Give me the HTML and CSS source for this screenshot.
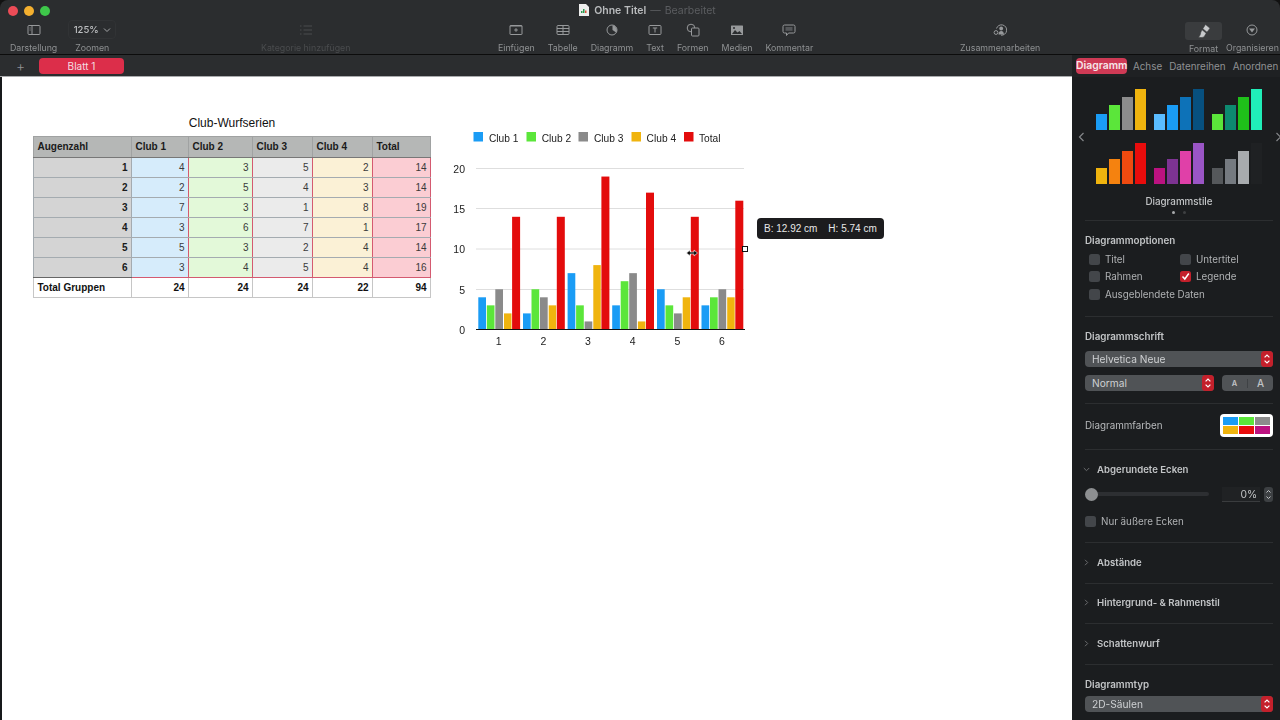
FILE: index.html
```html
<!DOCTYPE html>
<html lang="de">
<head>
  <meta charset="UTF-8">
  <title>Ohne Titel</title>
  <link rel="stylesheet" href="styles.css">
</head>
<body>
  <svg class="defs" width="0" height="0">
    <symbol id="stepper" viewBox="0 0 12 16">
      <rect width="12" height="16" rx="3.5" fill="#c4202b"/>
      <path d="M3.6 6.4 6 4l2.4 2.4M3.6 9.6 6 12l2.4-2.4" fill="none" stroke="#fff" stroke-width="1.2"/>
    </symbol>
  </svg>

  <div class="app">
    <header class="toolbar">
      <div class="traffic">
        <span class="light red"></span>
        <span class="light yellow"></span>
        <span class="light green"></span>
      </div>
      <div class="doc-title">
        <svg class="doc-icon" width="10" height="12" viewBox="0 0 10 12">
          <path d="M0 0h7l3 3v9H0z" fill="#eee"/>
          <path d="M2 9V7h1.5v2zM4 9V5h1.5v4z" fill="#2c9a50"/>
          <path d="M6 9V6.5h1.5V9z" fill="#e0503c"/>
        </svg>
        <b>Ohne Titel</b>
        <span class="dash">—</span>
        <span class="edited">Bearbeitet</span>
      </div>
      <div class="tools">
        <div class="group group-view">
          <div class="tool">
            <svg width="14" height="12" viewBox="0 0 14 12"><rect x="1" y="1.5" width="12" height="9" rx="1"/><path d="M5 1.5v9M2.600 4h1M2.600 6h1"/></svg>
            <span>Darstellung</span>
          </div>
          <div class="tool tool-zoom">
            <div class="zoom-box">125% <svg width="8" height="6" viewBox="0 0 8 6"><path d="M1 1.500 4 4.500 7 1.500"/></svg></div>
            <span>Zoomen</span>
          </div>
        </div>
        <div class="group group-category">
          <div class="tool dim">
            <svg width="14" height="12" viewBox="0 0 14 12"><path d="M1 2h1.500M1 6h1.500M1 10h1.500M4.500 2H13M4.500 6H13M4.500 10H13"/></svg>
            <span>Kategorie hinzufügen</span>
          </div>
        </div>
        <div class="group group-insert">
          <div class="tool">
            <svg width="14" height="12" viewBox="0 0 14 12"><rect x="1" y="1.500" width="12" height="9" rx=".5"/><path d="M1 2h12M7 4.200v3.600M5.200 6h3.600"/></svg>
            <span>Einfügen</span>
          </div>
          <div class="tool">
            <svg width="14" height="12" viewBox="0 0 14 12"><rect x="1" y="1.500" width="12" height="9" rx="1"/><path d="M1 4.500h12M1 7.500h12M7 1.500v9"/></svg>
            <span>Tabelle</span>
          </div>
          <div class="tool">
            <svg width="14" height="12" viewBox="0 0 14 12"><circle cx="7" cy="6" r="5"/><path class="solid" d="M7.500 1.200A5 5 0 0 1 11.200 8.500L7.500 6z"/></svg>
            <span>Diagramm</span>
          </div>
          <div class="tool">
            <svg width="14" height="12" viewBox="0 0 14 12"><rect x="1" y="1.500" width="12" height="9" rx="1"/><path d="M4.800 4h4.400M7 4v4.500"/></svg>
            <span>Text</span>
          </div>
          <div class="tool">
            <svg width="14" height="14" viewBox="0 0 14 14"><circle cx="5" cy="5" r="3.800"/><rect x="5.500" y="5" width="7.500" height="8" rx="1" fill="#2b2d2f"/></svg>
            <span>Formen</span>
          </div>
          <div class="tool">
            <svg width="14" height="12" viewBox="0 0 14 12"><rect class="solid" x="1" y="1.500" width="12" height="9.500" rx=".5"/><path class="cutout" d="M2 10 5 6l2.500 2.500L9.500 7l2.500 3z"/><circle class="cutout" cx="4" cy="4" r="1"/></svg>
            <span>Medien</span>
          </div>
          <div class="tool">
            <svg width="14" height="12" viewBox="0 0 14 12"><path d="M2.500 1h9A1.500 1.500 0 0 1 13 2.500v5A1.500 1.500 0 0 1 11.500 9H6.500l-2 2.500V9h-2A1.500 1.500 0 0 1 1 7.500v-5A1.500 1.500 0 0 1 2.500 1z"/><rect class="soft" x="3.500" y="3" width="7" height="3.800"/></svg>
            <span>Kommentar</span>
          </div>
        </div>
        <div class="group group-collab">
          <div class="tool">
            <svg width="14" height="12" viewBox="0 0 14 12"><path d="M3.500 4.500A5.200 5.200 0 1 1 8 11.200"/><circle class="solid" cx="8.200" cy="4.500" r="1.900"/><path class="solid" d="M5.500 10.500c0-2.500 1.200-3.500 2.700-3.500s2.700 1 2.700 3.500z"/><circle cx="3" cy="8.500" r="1.900"/></svg>
            <span>Zusammenarbeiten</span>
          </div>
        </div>
        <div class="group group-side">
          <div class="tool tool-format">
            <div class="format-box">
              <svg width="14" height="14" viewBox="0 0 14 14"><path class="brush" d="M8.500 .5 13 4.200 10 8.200 5.800 4.700z"/><path class="brush" d="M5 5.700 9.200 9.200 7 13c-2 .6-3.500.6-5.500.3 1.200-1.200 2-2.800 2.300-5z"/></svg>
            </div>
            <span>Format</span>
          </div>
          <div class="tool">
            <svg width="14" height="12" viewBox="0 0 14 12"><circle cx="7" cy="6" r="5"/><path class="solid" d="M4 4.500h6L7 8.500z"/></svg>
            <span>Organisieren</span>
          </div>
        </div>
      </div>
    </header>

    <div class="workspace">
      <main class="sheet-area">
        <div class="tabbar">
          <span class="add-sheet">+</span>
          <span class="sheet-tab">Blatt 1</span>
        </div>
        <div class="canvas">
          <section class="table-block">
            <h2>Club-Wurfserien</h2>
            <table class="data-table">
              <colgroup>
                <col class="col-a"><col class="col-b"><col class="col-c"><col class="col-d"><col class="col-e"><col class="col-f">
              </colgroup>
              <thead>
                <tr><th>Augenzahl</th><th>Club 1</th><th>Club 2</th><th>Club 3</th><th>Club 4</th><th>Total</th></tr>
              </thead>
              <tbody>
                <tr><th>1</th><td class="c-blue">4</td><td class="c-green">3</td><td class="c-grey">5</td><td class="c-yellow">2</td><td class="c-red">14</td></tr>
                <tr><th>2</th><td class="c-blue">2</td><td class="c-green">5</td><td class="c-grey">4</td><td class="c-yellow">3</td><td class="c-red">14</td></tr>
                <tr><th>3</th><td class="c-blue">7</td><td class="c-green">3</td><td class="c-grey">1</td><td class="c-yellow">8</td><td class="c-red">19</td></tr>
                <tr><th>4</th><td class="c-blue">3</td><td class="c-green">6</td><td class="c-grey">7</td><td class="c-yellow">1</td><td class="c-red">17</td></tr>
                <tr><th>5</th><td class="c-blue">5</td><td class="c-green">3</td><td class="c-grey">2</td><td class="c-yellow">4</td><td class="c-red">14</td></tr>
                <tr><th>6</th><td class="c-blue">3</td><td class="c-green">4</td><td class="c-grey">5</td><td class="c-yellow">4</td><td class="c-red">16</td></tr>
              </tbody>
              <tfoot>
                <tr><th>Total Gruppen</th><td>24</td><td>24</td><td>24</td><td>22</td><td>94</td></tr>
              </tfoot>
            </table>
          </section>

          <svg class="chart" width="300" height="225" viewBox="450 125 300 225">
            <!-- legend -->
            <rect class="s1" x="473.500" y="132" width="9.500" height="9.500"/><text class="legend" x="489" y="141.500">Club 1</text>
            <rect class="s2" x="526.500" y="132" width="9.500" height="9.500"/><text class="legend" x="541.700" y="141.500">Club 2</text>
            <rect class="s3" x="578.500" y="132" width="9.500" height="9.500"/><text class="legend" x="594" y="141.500">Club 3</text>
            <rect class="s4" x="631.500" y="132" width="9.500" height="9.500"/><text class="legend" x="646.600" y="141.500">Club 4</text>
            <rect class="s5" x="684" y="132" width="9.500" height="9.500"/><text class="legend" x="699" y="141.500">Total</text>

            <!-- grid -->
            <path class="grid" d="M476 168.500H744M476 208.500H744M476 249H744M476 289.500H744"/>
            <text class="tick" x="465" y="172.500">20</text>
            <text class="tick" x="465" y="212.500">15</text>
            <text class="tick" x="465" y="253">10</text>
            <text class="tick" x="465" y="293.500">5</text>
            <text class="tick" x="465" y="334">0</text>

            <!-- bars: 8.05px per unit, drawn up from the axis -->
            <g transform="translate(478.300 329.500)">
              <rect class="s1" x="0" y="-32.200" width="7.700" height="32.200"/>
              <rect class="s2" x="8.500" y="-24.150" width="7.700" height="24.150"/>
              <rect class="s3" x="17" y="-40.250" width="7.700" height="40.250"/>
              <rect class="s4" x="25.700" y="-16.100" width="7.500" height="16.100"/>
              <rect class="s5" x="33.800" y="-112.700" width="8" height="112.700"/>
            </g>
            <g transform="translate(523 329.500)">
              <rect class="s1" x="0" y="-16.100" width="7.700" height="16.100"/>
              <rect class="s2" x="8.500" y="-40.250" width="7.700" height="40.250"/>
              <rect class="s3" x="17" y="-32.200" width="7.700" height="32.200"/>
              <rect class="s4" x="25.700" y="-24.150" width="7.500" height="24.150"/>
              <rect class="s5" x="33.800" y="-112.700" width="8" height="112.700"/>
            </g>
            <g transform="translate(567.600 329.500)">
              <rect class="s1" x="0" y="-56.350" width="7.700" height="56.350"/>
              <rect class="s2" x="8.500" y="-24.150" width="7.700" height="24.150"/>
              <rect class="s3" x="17" y="-8.050" width="7.700" height="8.050"/>
              <rect class="s4" x="25.700" y="-64.400" width="7.500" height="64.400"/>
              <rect class="s5" x="33.800" y="-152.950" width="8" height="152.950"/>
            </g>
            <g transform="translate(612.200 329.500)">
              <rect class="s1" x="0" y="-24.150" width="7.700" height="24.150"/>
              <rect class="s2" x="8.500" y="-48.300" width="7.700" height="48.300"/>
              <rect class="s3" x="17" y="-56.350" width="7.700" height="56.350"/>
              <rect class="s4" x="25.700" y="-8.050" width="7.500" height="8.050"/>
              <rect class="s5" x="33.800" y="-136.850" width="8" height="136.850"/>
            </g>
            <g transform="translate(657 329.500)">
              <rect class="s1" x="0" y="-40.250" width="7.700" height="40.250"/>
              <rect class="s2" x="8.500" y="-24.150" width="7.700" height="24.150"/>
              <rect class="s3" x="17" y="-16.100" width="7.700" height="16.100"/>
              <rect class="s4" x="25.700" y="-32.200" width="7.500" height="32.200"/>
              <rect class="s5" x="33.800" y="-112.700" width="8" height="112.700"/>
            </g>
            <g transform="translate(701.500 329.500)">
              <rect class="s1" x="0" y="-24.150" width="7.700" height="24.150"/>
              <rect class="s2" x="8.500" y="-32.200" width="7.700" height="32.200"/>
              <rect class="s3" x="17" y="-40.250" width="7.700" height="40.250"/>
              <rect class="s4" x="25.700" y="-32.200" width="7.500" height="32.200"/>
              <rect class="s5" x="33.800" y="-128.800" width="8" height="128.800"/>
            </g>

            <path class="axis" d="M476 329.500H745"/>
            <text class="cat" x="498.700" y="344.500">1</text>
            <text class="cat" x="543.300" y="344.500">2</text>
            <text class="cat" x="588" y="344.500">3</text>
            <text class="cat" x="632.600" y="344.500">4</text>
            <text class="cat" x="677.300" y="344.500">5</text>
            <text class="cat" x="722" y="344.500">6</text>

            <!-- selection handle and resize cursor -->
            <rect class="handle" x="742.500" y="246.500" width="5" height="5"/>
            <path class="cursor" d="M686.500 253l3.500-3v2h4v-2l3.500 3-3.500 3v-2h-4v2z"/>
          </svg>

          <div class="size-tip"><span>B: 12.92 cm</span><span>H: 5.74 cm</span></div>
        </div>
      </main>

      <aside class="inspector">
        <nav class="inspector-tabs">
          <span class="itab active">Diagramm</span>
          <span class="itab">Achse</span>
          <i class="tab-sep"></i>
          <span class="itab">Datenreihen</span>
          <i class="tab-sep"></i>
          <span class="itab">Anordnen</span>
        </nav>

        <section class="isec sec-styles">
          <svg class="arrow arrow-left" width="7" height="10" viewBox="0 0 7 10"><path d="M5.500 1 1.500 5l4 4"/></svg>
          <div class="style-grid">
            <div class="swatch"><i class="b-blue"></i><i class="b-lime"></i><i class="b-gray"></i><i class="b-amber"></i></div>
            <div class="swatch"><i class="b-sky"></i><i class="b-blue"></i><i class="b-ocean"></i><i class="b-navy"></i></div>
            <div class="swatch"><i class="b-lime"></i><i class="b-teal"></i><i class="b-leaf"></i><i class="b-mint"></i></div>
            <div class="swatch"><i class="b-amber"></i><i class="b-orange"></i><i class="b-flame"></i><i class="b-red"></i></div>
            <div class="swatch"><i class="b-berry"></i><i class="b-plum"></i><i class="b-pink"></i><i class="b-violet"></i></div>
            <div class="swatch"><i class="b-slate"></i><i class="b-steel"></i><i class="b-silver"></i><i class="b-ink"></i></div>
          </div>
          <svg class="arrow arrow-right" width="7" height="10" viewBox="0 0 7 10"><path d="M1.500 1l4 4-4 4"/></svg>
          <div class="style-name">Diagrammstile</div>
          <div class="dots"><i class="on"></i><i></i></div>
        </section>

        <section class="isec sec-options">
          <h3>Diagrammoptionen</h3>
          <div class="check-grid">
            <label class="check"><i class="box"></i>Titel</label>
            <label class="check"><i class="box"></i>Untertitel</label>
            <label class="check"><i class="box"></i>Rahmen</label>
            <label class="check"><i class="box checked"><svg width="11" height="11" viewBox="0 0 11 11"><path d="M2.500 5.500 4.800 8 8.800 2.500"/></svg></i>Legende</label>
            <label class="check wide"><i class="box"></i>Ausgeblendete Daten</label>
          </div>
        </section>

        <section class="isec sec-font">
          <h3>Diagrammschrift</h3>
          <div class="select">Helvetica Neue<svg width="12" height="16"><use href="#stepper"/></svg></div>
          <div class="font-row">
            <div class="select select-weight">Normal<svg width="12" height="16"><use href="#stepper"/></svg></div>
            <div class="size-btns"><span class="small-a">A</span><span class="big-a">A</span></div>
          </div>
        </section>

        <section class="isec sec-colors">
          <span class="plain-label">Diagrammfarben</span>
          <div class="palette">
            <i class="b-blue"></i><i class="b-lime"></i><i class="b-gray"></i>
            <i class="b-amber"></i><i class="b-red"></i><i class="b-berry"></i>
          </div>
        </section>

        <section class="isec sec-corners">
          <h4 class="disclosure"><svg width="7" height="7" viewBox="0 0 7 7"><path d="M.8 2l2.700 2.700L6.200 2"/></svg>Abgerundete Ecken</h4>
          <div class="slider-row">
            <div class="slider"><i class="knob"></i></div>
            <div class="percent">0%</div>
            <div class="mini-stepper">
              <svg width="9" height="15" viewBox="0 0 9 15"><rect width="9" height="15" rx="3"/><path d="M2.500 5.500 4.500 3.500l2 2M2.500 9.500l2 2 2-2"/></svg>
            </div>
          </div>
          <label class="check outer"><i class="box"></i>Nur äußere Ecken</label>
        </section>

        <section class="isec sec-fold">
          <h4 class="disclosure"><svg width="7" height="7" viewBox="0 0 7 7"><path d="M2 .8l2.700 2.700L2 6.200"/></svg>Abstände</h4>
        </section>
        <section class="isec sec-fold">
          <h4 class="disclosure"><svg width="7" height="7" viewBox="0 0 7 7"><path d="M2 .8l2.700 2.700L2 6.200"/></svg>Hintergrund- &amp; Rahmenstil</h4>
        </section>
        <section class="isec sec-fold">
          <h4 class="disclosure"><svg width="7" height="7" viewBox="0 0 7 7"><path d="M2 .8l2.700 2.700L2 6.200"/></svg>Schattenwurf</h4>
        </section>

        <section class="isec sec-type">
          <h3>Diagrammtyp</h3>
          <div class="select">2D-Säulen<svg width="12" height="16"><use href="#stepper"/></svg></div>
        </section>
      </aside>
    </div>
  </div>
</body>
</html>
```

FILE: styles.css
```css
html, body {
  margin: 0;
  padding: 0;
  height: 720px;
  overflow: hidden;
  background: #111;
}

body {
  font-family: Inter, "Noto Sans", sans-serif;
}

.defs {
  position: absolute;
}

.app {
  width: 1280px;
  height: 720px;
  display: flex;
  flex-direction: column;
  border-radius: 8px 8px 0 0;
  overflow: hidden;
  filter: blur(0.35px);
}

/* toolbar */
.toolbar {
  height: 54px;
  flex: none;
  position: relative;
  background: #2b2d2f;
  border-bottom: 1px solid #0c0c0c;
}

.traffic {
  position: absolute;
  left: 8px;
  top: 5.5px;
  display: flex;
  gap: 6px;
}

.light {
  width: 10px;
  height: 10px;
  border-radius: 50%;
}

.light.red { background: #ec4c57; }
.light.yellow { background: #f4b02f; }
.light.green { background: #3ec74a; }

.doc-title {
  height: 20px;
  display: flex;
  align-items: center;
  justify-content: center;
  gap: 4px;
  margin-left: 15px;
  font-size: 10.500px;
  color: #b9bbbd;
}

.doc-title b {
  margin-left: 1px;
  font-weight: 600;
}

.dash, .edited {
  color: #5b5d60;
}

.tools {
  display: flex;
  padding-left: 10px;
  height: 34px;
}

.group {
  display: flex;
  gap: 13px;
  flex: none;
}

.group-view { width: 251px; gap: 11px; }
.group-category { width: 237px; }
.group-insert { width: 462px; }
.group-collab { width: 225px; }
.group-side { gap: 4px; }

.tool {
  display: flex;
  flex-direction: column;
  align-items: center;
  font-size: 8.800px;
  color: #8f9193;
  white-space: nowrap;
}

.tool > svg {
  height: 14px;
  margin-top: 3px;
  margin-bottom: 4.500px;
}

.tool svg path,
.tool svg rect,
.tool svg circle {
  fill: none;
  stroke: #97999b;
  stroke-width: 1;
}

.tool svg rect[fill] {
  fill: #2b2d2f;
}

.tool svg .solid {
  fill: #97999b;
  stroke: none;
}

.tool svg .cutout {
  fill: #2b2d2f;
  stroke: none;
}

.tool svg .soft {
  fill: #55575a;
  stroke: none;
}

.tool.dim {
  color: #4a4c4e;
}

.tool.dim svg path {
  stroke: #4a4c4e;
}

.zoom-box {
  height: 19px;
  width: 48px;
  margin-bottom: 2.500px;
  box-sizing: border-box;
  border: 1px solid #313335;
  border-radius: 4px;
  color: #bdbfc1;
  font-size: 9.500px;
  font-weight: 500;
  display: flex;
  align-items: center;
  justify-content: center;
  gap: 4px;
}

.tool .zoom-box svg path {
  stroke: #a5a7a9;
}

.format-box {
  width: 37px;
  height: 18px;
  margin: 2px 0 2.500px;
  border-radius: 3px;
  background: #3a3c3e;
  display: flex;
  align-items: center;
  justify-content: center;
}

.tool .format-box svg .brush {
  fill: #c8cacc;
  stroke: #3a3c3e;
  stroke-width: .6;
}

/* sheet area */
.workspace {
  flex: 1;
  display: flex;
  min-height: 0;
}

.sheet-area {
  width: 1072px;
  flex: none;
  display: flex;
  flex-direction: column;
  background: #17191b;
}

.tabbar {
  height: 21px;
  flex: none;
  display: flex;
  align-items: center;
  padding-left: 16px;
  background: #2b2d2f;
  border-bottom: 1px solid #a9abad;
}

.add-sheet {
  width: 23px;
  color: #8f9193;
  font-size: 14px;
  font-weight: 300;
}

.sheet-tab {
  width: 85px;
  height: 16px;
  line-height: 16px;
  border-radius: 4px;
  background: #dc2e4a;
  color: #f4dfe2;
  font-size: 10px;
  text-align: center;
}

.canvas {
  flex: 1;
  position: relative;
  margin-left: 2px;
  padding: 39px 0 0 31px;
  display: flex;
  align-items: flex-start;
  background: #fff;
  font-family: "Liberation Sans", Arial, sans-serif;
}

/* table */
.table-block {
  width: 398px;
  flex: none;
}

.table-block h2 {
  margin: 0 0 5px;
  height: 15px;
  line-height: 15px;
  font-size: 12px;
  font-weight: 400;
  text-align: center;
  color: #111;
}

.data-table {
  width: 397px;
  table-layout: fixed;
  border-collapse: collapse;
  font-size: 10px;
  color: #3a3a3a;
}

.col-a { width: 98px; }
.col-b { width: 57px; }
.col-c { width: 64px; }
.col-d { width: 60px; }
.col-e { width: 60px; }
.col-f { width: 58px; }

.data-table th,
.data-table td {
  height: 20px;
  padding: 0 3.500px;
  box-sizing: border-box;
  text-align: right;
  border: 1px solid #a4abb0;
}

.data-table th {
  font-weight: 700;
  color: #1a1a1a;
  background: #d4d4d4;
}

.data-table thead th {
  height: 20.500px;
  text-align: left;
  background: #b5b7b6;
  border-color: #a0a2a2;
  border-bottom-color: #777;
}

.data-table tbody td {
  border-left: 1px solid #d45a70;
  border-right: 1px solid #d45a70;
}

.data-table tbody tr:first-child td {
  border-top: 1px solid #d45a70;
}

.data-table tbody tr:last-child td {
  border-bottom: 1px solid #d45a70;
}

.data-table tbody tr:last-child th {
  border-bottom-color: #666;
}

.c-blue { background: #d6ecfb; }
.c-green { background: #e3f9d9; }
.c-grey { background: #ebebeb; }
.c-yellow { background: #fbf1d6; }
.c-red { background: #fbcdd3; }

.data-table tfoot th,
.data-table tfoot td {
  background: #fff;
  color: #111;
  font-weight: 700;
  border-color: #c6c6c6;
}

.data-table tfoot th {
  text-align: left;
}

/* chart */
.chart {
  flex: none;
  margin: 9px 0 0 19px;
  display: block;
  overflow: visible;
}

.s1 { fill: #1a9cf5; }
.s2 { fill: #5be63a; }
.s3 { fill: #8a8a8a; }
.s4 { fill: #f0b40e; }
.s5 { fill: #e30c0c; }

.legend {
  font-size: 10.200px;
  fill: #222;
}

.tick {
  font-size: 10.500px;
  fill: #222;
  text-anchor: end;
}

.cat {
  font-size: 10.500px;
  fill: #222;
  text-anchor: middle;
}

.grid {
  fill: none;
  stroke: #dedede;
  stroke-width: 1;
}

.axis {
  fill: none;
  stroke: #111;
  stroke-width: 1;
}

.handle {
  fill: #fff;
  stroke: #111;
  stroke-width: 1;
}

.cursor {
  fill: #111;
  stroke: #fff;
  stroke-width: 0.600;
}

.size-tip {
  position: absolute;
  left: 755px;
  top: 141px;
  width: 127px;
  height: 21px;
  box-sizing: border-box;
  padding-left: 7px;
  display: flex;
  align-items: center;
  gap: 11px;
  border-radius: 4px;
  background: #1c1c1e;
  color: #e8e8e8;
  font-size: 10px;
}

/* inspector */
.inspector {
  width: 208px;
  flex: none;
  background: #1b1d1f;
  color: #b8babc;
  font-size: 9.800px;
  overflow: hidden;
}

.inspector-tabs {
  height: 22px;
  display: flex;
  align-items: center;
  padding-left: 4px;
  white-space: nowrap;
  background: #1f2123;
  font-size: 9.900px;
  color: #8f9193;
}

.itab {
  padding: 0 3.500px;
}

.itab.active {
  width: 52px;
  height: 16px;
  line-height: 16px;
  box-sizing: border-box;
  padding: 0;
  margin-right: 2px;
  text-align: center;
  border-radius: 4px;
  background: #cf3a55;
  color: #f6e6e9;
  font-size: 10.400px;
  font-weight: 600;
}

.tab-sep {
  width: 1px;
  height: 10px;
  background: #3a3c3e;
}

.isec {
  position: relative;
  box-sizing: border-box;
  margin: 0 7px 0 13px;
  border-bottom: 1px solid #2c2e30;
}

.isec h3,
.isec h4 {
  margin: 0;
  font-size: 9.800px;
  font-weight: 600;
  color: #c2c4c6;
}

.isec h4 {
  font-size: 9.600px;
}

/* chart styles */
.sec-styles {
  height: 144px;
  margin-left: 8px;
  margin-right: 0;
  border-bottom: 0;
}

.sec-styles::after {
  content: "";
  position: absolute;
  left: 5px;
  right: 7px;
  bottom: 0;
  height: 1px;
  background: #2c2e30;
}

.arrow {
  position: absolute;
  top: 55px;
  fill: none;
  stroke: #85878a;
  stroke-width: 1.200;
}

.arrow-left { left: -2px; }
.arrow-right { left: 195px; }

.style-grid {
  position: absolute;
  left: 16px;
  top: 12px;
  display: grid;
  grid-template-columns: repeat(3, 50px);
  column-gap: 8px;
  row-gap: 13px;
}

.swatch {
  height: 41px;
  display: flex;
  align-items: flex-end;
  gap: 2px;
}

.swatch i {
  width: 11px;
  display: block;
}

.swatch i:nth-child(1) { height: 16px; }
.swatch i:nth-child(2) { height: 25px; }
.swatch i:nth-child(3) { height: 33px; }
.swatch i:nth-child(4) { height: 41px; }

.b-blue { background: #1a9cf5; }
.b-lime { background: #5be63a; }
.b-gray { background: #8c8c8c; }
.b-amber { background: #f0b40e; }
.b-sky { background: #5abcff; }
.b-ocean { background: #0d72b8; }
.b-navy { background: #07507f; }
.b-teal { background: #0d8a70; }
.b-leaf { background: #1fc01a; }
.b-mint { background: #20eeb8; }
.b-orange { background: #f5820f; }
.b-flame { background: #ef4a10; }
.b-red { background: #e80c0c; }
.b-berry { background: #bb1280; }
.b-plum { background: #7d3392; }
.b-pink { background: #e040a8; }
.b-violet { background: #9a55c5; }
.b-slate { background: #55585b; }
.b-steel { background: #757a80; }
.b-silver { background: #a8abae; }
.b-ink { background: #1f2123; }

.style-name {
  position: absolute;
  top: 119px;
  left: 0;
  width: 198px;
  text-align: center;
  font-size: 9.800px;
  font-weight: 500;
  color: #c2c4c6;
}

.dots {
  position: absolute;
  top: 134px;
  left: 92px;
  display: flex;
  gap: 8px;
}

.dots i {
  width: 3px;
  height: 3px;
  border-radius: 50%;
  background: #3e4042;
}

.dots i.on {
  background: #a8aaac;
}

/* options */
.sec-options {
  height: 96px;
  padding-top: 14px;
}

.check-grid {
  display: grid;
  grid-template-columns: 91px 1fr;
  row-gap: 5.500px;
  margin: 7px 0 0 4px;
}

.check {
  display: flex;
  align-items: center;
  gap: 5px;
  height: 12px;
  color: #b0b2b4;
}

.check.wide {
  grid-column: 1 / 3;
}

.box {
  width: 11px;
  height: 11px;
  flex: none;
  border-radius: 2.500px;
  background: #43464a;
}

.box.checked {
  background: #c4202b;
}

.box svg {
  display: block;
  fill: none;
  stroke: #fff;
  stroke-width: 1.500;
}

/* selects */
.select {
  height: 16px;
  display: flex;
  align-items: center;
  justify-content: space-between;
  padding-left: 7px;
  border-radius: 4px;
  background: #505356;
  color: #cfd1d3;
  font-size: 10.200px;
}

.sec-font {
  height: 87px;
  padding-top: 14px;
}

.sec-font .select {
  margin-top: 9px;
}

.font-row {
  display: flex;
  justify-content: space-between;
  margin-top: 8px;
}

.font-row .select {
  margin-top: 0;
}

.select-weight {
  width: 122px;
}

.size-btns {
  width: 51px;
  height: 16px;
  display: flex;
  align-items: center;
  border-radius: 4px;
  background: #505356;
  color: #c2c4c6;
}

.size-btns span {
  flex: 1;
  text-align: center;
}

.small-a {
  font-size: 7.500px;
  font-weight: 600;
  border-right: 1px solid #3f4245;
}

.big-a {
  font-size: 10px;
  font-weight: 500;
}

/* colours */
.sec-colors {
  height: 46px;
  padding-bottom: 2px;
  display: flex;
  align-items: center;
  justify-content: space-between;
}

.plain-label {
  color: #b8babc;
}

.palette {
  width: 47px;
  height: 17px;
  padding: 3px;
  border-radius: 4px;
  background: #fff;
  display: grid;
  grid-template-columns: repeat(3, 1fr);
  grid-template-rows: repeat(2, 1fr);
  gap: 1px;
}

/* corners */
.disclosure {
  display: flex;
  align-items: center;
  gap: 6px;
  margin-left: -2px !important;
}

.disclosure svg {
  flex: none;
  width: 7px;
  margin-right: 1px;
  fill: none;
  stroke: #6a6c6e;
  stroke-width: 1;
}

.sec-corners {
  height: 93px;
  padding-top: 14px;
}

.slider-row {
  display: flex;
  align-items: center;
  margin-top: 11px;
  height: 16px;
}

.slider {
  width: 125px;
  height: 4px;
  position: relative;
  border-radius: 2px;
  background: #2d2f32;
}

.knob {
  position: absolute;
  left: 0;
  top: -4.500px;
  width: 13px;
  height: 13px;
  border-radius: 50%;
  background: #8d8f91;
}

.percent {
  width: 38px;
  height: 15px;
  line-height: 15px;
  margin-left: 13px;
  box-sizing: border-box;
  padding-right: 3px;
  text-align: right;
  background: #202224;
  border-bottom: 1px solid #3a3c3e;
  color: #c2c4c6;
  font-size: 10.300px;
}

.mini-stepper {
  margin-left: 4px;
  height: 15px;
}

.mini-stepper svg {
  display: block;
}

.mini-stepper rect {
  fill: #3d4043;
}

.mini-stepper path {
  fill: none;
  stroke: #c2c4c6;
  stroke-width: 1;
}

.check.outer {
  margin-top: 13px;
  gap: 5px;
}

/* collapsed rows */
.sec-fold {
  height: 40.500px;
  padding-bottom: 1px;
  display: flex;
  align-items: center;
}

.sec-type {
  border-bottom: 0;
  padding-top: 14px;
}

.sec-type .select {
  margin-top: 6px;
}
```
